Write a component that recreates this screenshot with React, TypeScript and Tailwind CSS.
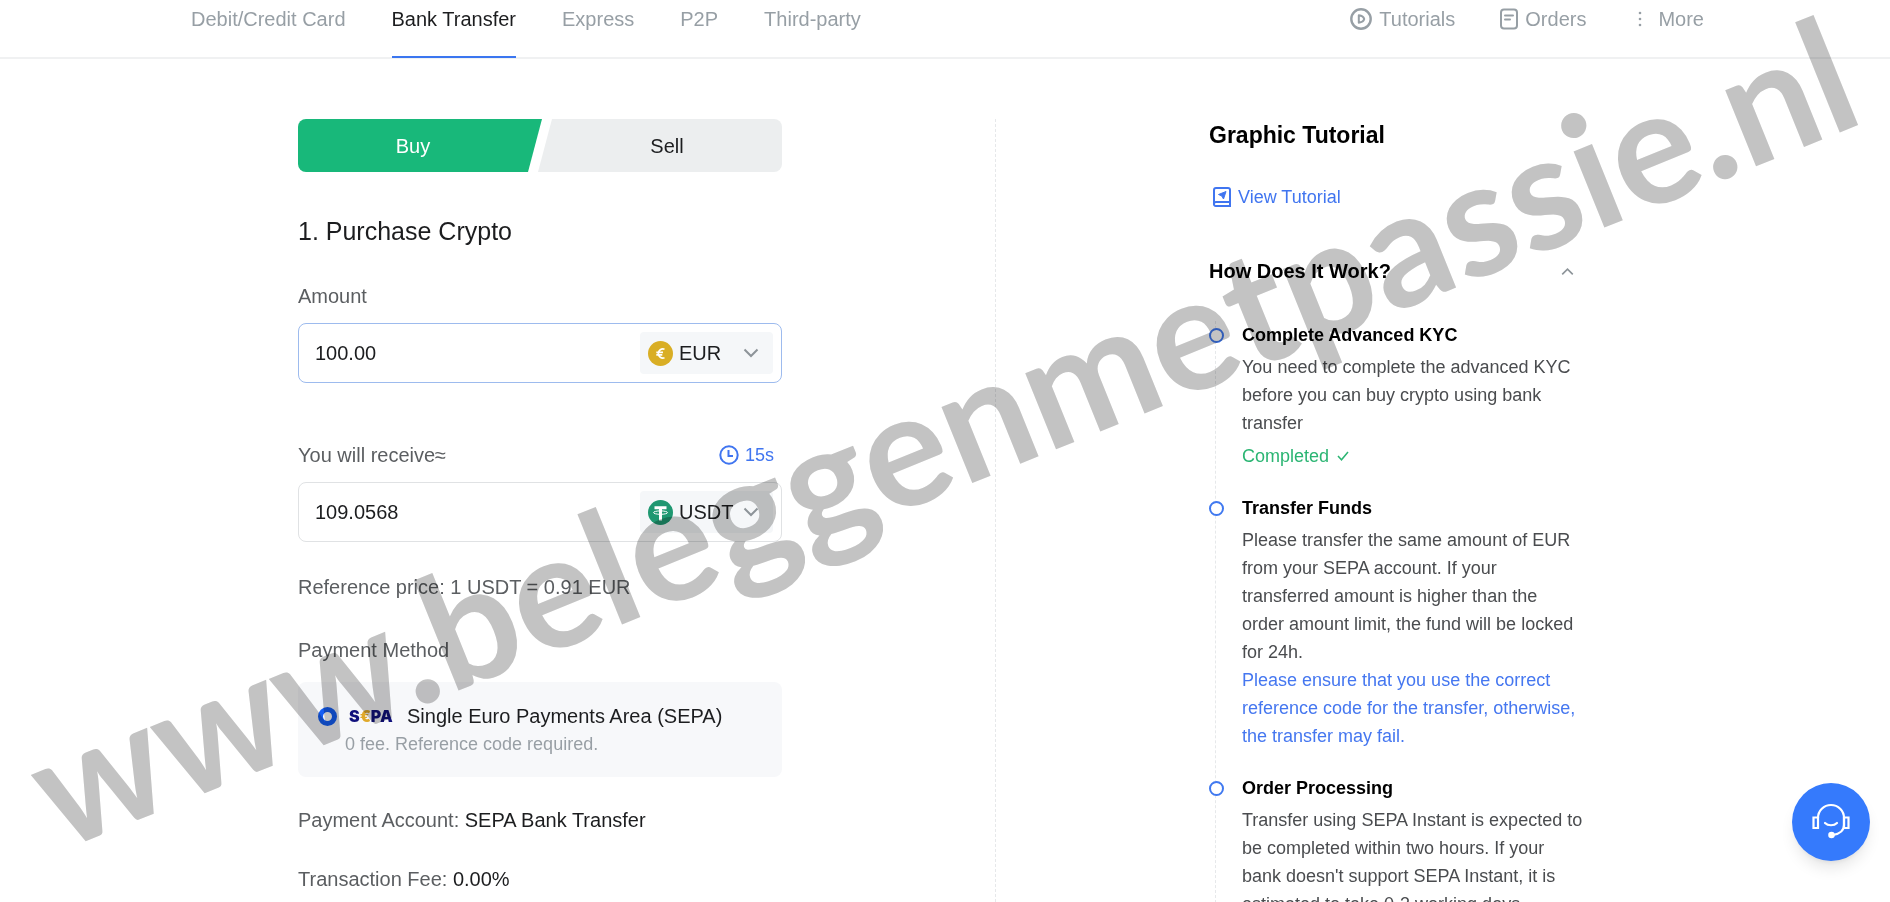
import { useState } from "react";

const tabs = ["Debit/Credit Card", "Bank Transfer", "Express", "P2P", "Third-party"];

const steps = [
  {
    title: "Complete Advanced KYC",
    text: "You need to complete the advanced KYC before you can buy crypto using bank transfer",
    done: true,
  },
  {
    title: "Transfer Funds",
    text: "Please transfer the same amount of EUR from your SEPA account. If your transferred amount is higher than the order amount limit, the fund will be locked for 24h.",
    warning: "Please ensure that you use the correct reference code for the transfer, otherwise, the transfer may fail.",
  },
  {
    title: "Order Processing",
    text: "Transfer using SEPA Instant is expected to be completed within two hours. If your bank doesn't support SEPA Instant, it is estimated to take 0-3 working days.",
  },
];

function PlayIcon() {
  return (
    <svg className="h-6 w-6" viewBox="0 0 24 24" fill="none" stroke="currentColor" strokeWidth="2.4" aria-hidden="true">
      <circle cx="12" cy="12" r="9.7" />
      <path d="M9.8 8.3v7.4c2.6-.4 5-2 5.4-3.7-.4-1.7-2.8-3.3-5.4-3.7z" strokeWidth="2" strokeLinejoin="round" />
    </svg>
  );
}

function OrdersIcon() {
  return (
    <svg className="h-6 w-5" viewBox="0 0 20 24" fill="none" stroke="currentColor" strokeWidth="2" aria-hidden="true">
      <rect x="2" y="2.5" width="16" height="19" rx="3" />
      <path d="M6 8.5h8M6 12.5h5" strokeLinecap="round" />
    </svg>
  );
}

function Chevron({ className }: { className: string }) {
  return (
    <svg className={className} viewBox="0 0 16 10" fill="none" stroke="currentColor" strokeWidth="2" aria-hidden="true">
      <path d="M1.5 1.5 8 8l6.5-6.5" />
    </svg>
  );
}

function EuroIcon() {
  return (
    <svg className="h-[25px] w-[25px] shrink-0" viewBox="0 0 25 25" fill="none" aria-hidden="true">
      <circle cx="12.5" cy="12.5" r="12.5" fill="#d9ae25" />
      <path d="M16.5 8.2a4.6 4.6 0 0 0-6.2 4.3 4.6 4.6 0 0 0 6.2 4.3M8.3 11.4H15M8.3 13.8h6" stroke="#fff" strokeWidth="1.7" />
    </svg>
  );
}

function TetherIcon() {
  return (
    <svg className="h-[25px] w-[25px] shrink-0" viewBox="0 0 25 25" fill="none" aria-hidden="true">
      <circle cx="12.5" cy="12.5" r="12.5" fill="#1f9871" />
      <path d="M6.5 6.3h12v3H14v11.2h-3V9.3H6.5z" fill="#fff" />
      <ellipse cx="12.5" cy="12.6" rx="7" ry="1.7" stroke="#fff" />
    </svg>
  );
}

type CoinFieldProps = {
  id: string;
  label: string;
  value: string;
  onChange: (value: string) => void;
  coin: string;
  icon: React.ReactNode;
  active?: boolean;
  extra?: React.ReactNode;
};

function CoinField({ id, label, value, onChange, coin, icon, active, extra }: CoinFieldProps) {
  return (
    <div>
      <div className="mb-[13px] flex h-7 items-center justify-between pr-2">
        <label htmlFor={id} className="text-[#5b5e61]">{label}</label>
        {extra}
      </div>
      <div className={`flex h-[60px] items-center rounded-lg border pr-2 pl-4 ${active ? "border-[#9dbbee]" : "border-[#e0e2e4]"}`}>
        <input
          id={id}
          value={value}
          onChange={(e) => onChange(e.target.value)}
          className="min-w-0 flex-1 bg-transparent text-[#1c1d1f] outline-none"
        />
        <div className="relative flex h-[42px] w-[133px] items-center rounded bg-[#f5f7f9] pl-2">
          {icon}
          <select aria-label={`${label} currency`} className="w-full appearance-none bg-transparent pl-[6px] text-[#1c1d1f] outline-none">
            <option>{coin}</option>
          </select>
          <Chevron className="pointer-events-none absolute right-[14px] h-[10px] w-4 text-[#8d9499]" />
        </div>
      </div>
    </div>
  );
}

export default function App() {
  const [tab, setTab] = useState("Bank Transfer");
  const [amount, setAmount] = useState("100.00");
  const [receive, setReceive] = useState("109.0568");
  const [open, setOpen] = useState(true);

  return (
    <div className="relative h-screen overflow-hidden bg-white font-['Liberation_Sans',Arial,sans-serif] text-[20px] leading-7 text-[#1c1d1f]">
      <header className="flex h-[59px] justify-between border-b-2 border-[#f0f1f2] pr-[186px] pl-[191px] text-[#979fa5]">
        <nav className="-mb-[1px] flex gap-[46px]">
          {tabs.map((name) => (
            <button
              key={name}
              onClick={() => setTab(name)}
              className={`border-b-2 pt-1 pb-[23px] whitespace-nowrap ${name === tab ? "border-[#3b76f0] text-[#1c1d1f]" : "border-transparent"}`}
            >
              {name}
            </button>
          ))}
        </nav>
        <div className="flex items-start gap-11 pt-[5px] whitespace-nowrap">
          <a href="#tutorials" className="flex items-center gap-[6px]"><PlayIcon /> Tutorials</a>
          <a href="#orders" className="flex items-center gap-[6px]"><OrdersIcon /> Orders</a>
          <button className="ml-2 flex items-center gap-4">
            <svg className="h-5 w-1" viewBox="0 0 4 20" fill="currentColor" aria-hidden="true">
              <circle cx="2" cy="4" r="1.3" />
              <circle cx="2" cy="10" r="1.3" />
              <circle cx="2" cy="16" r="1.3" />
            </svg>
            More
          </button>
        </div>
      </header>

      <div className="flex pt-[60px] pl-[298px]">
        <main className="w-[484px] shrink-0">
          <div className="flex h-[53px]">
            <button className="flex-1 rounded-l-lg bg-[#18b87a] pr-[14px] text-white [clip-path:polygon(0_0,100%_0,calc(100%_-_14px)_100%,0_100%)]">Buy</button>
            <button className="-ml-1 flex-1 rounded-r-lg bg-[#eceeef] pl-[14px] [clip-path:polygon(14px_0,100%_0,100%_100%,0_100%)]">Sell</button>
          </div>

          <h1 className="mt-10 mb-8 text-[25px] leading-[38px]">1. Purchase Crypto</h1>

          <CoinField id="amount" label="Amount" value={amount} onChange={setAmount} coin="EUR" icon={<EuroIcon />} active />
          <div className="mt-[58px]">
            <CoinField
              id="receive"
              label="You will receive≈"
              value={receive}
              onChange={setReceive}
              coin="USDT"
              icon={<TetherIcon />}
              extra={
                <span className="flex items-center gap-[6px] text-[18px] text-[#4075f0]">
                  <svg className="h-5 w-5" viewBox="0 0 20 20" fill="none" stroke="currentColor" strokeWidth="2" aria-hidden="true">
                    <circle cx="10" cy="10" r="8.7" />
                    <path d="M9.5 5v6H14" />
                  </svg>
                  15s
                </span>
              }
            />
          </div>

          <p className="mt-[31px] text-[#5b5e61]">Reference price: 1 USDT = 0.91 EUR</p>
          <p className="mt-[35px] text-[#5b5e61]">Payment Method</p>

          <label className="mt-[18px] flex h-[95px] rounded-lg bg-[#f7f8fa] pt-5 pl-5">
            <input type="radio" name="method" defaultChecked className="mt-[5px] mr-2 h-[19px] w-[19px] shrink-0 appearance-none rounded-full border-[5px] border-[#155ef5] bg-white" />
            <span>
              <span className="flex items-center pl-1">
                <span className="w-[58px] font-['Inter',sans-serif] text-[16px] font-black text-[#10107c]" aria-label="SEPA">
                  S<span className="text-[#e0a92a]">€</span>PA
                </span>
                Single Euro Payments Area (SEPA)
              </span>
              <span className="block text-[18px] text-[#989fa5]">0 fee. Reference code required.</span>
            </span>
          </label>

          <p className="mt-[29px] text-[#5b5e61]">Payment Account: <span className="text-[#1c1d1f]">SEPA Bank Transfer</span></p>
          <p className="mt-[31px] text-[#5b5e61]">Transaction Fee: <span className="text-[#1c1d1f]">0.00%</span></p>
        </main>

        <aside className="ml-[213px] border-l border-dashed border-[#e6e8ea] pl-[213px]">
          <h2 className="mt-[2px] text-[23px] font-bold text-black">Graphic Tutorial</h2>
          <a href="#view" className="mt-[34px] flex items-center gap-[6px] pl-[3px] text-[18px] text-[#4075f0]">
            <svg className="h-5 w-5" viewBox="0 0 20 20" fill="none" stroke="currentColor" strokeWidth="2" aria-hidden="true">
              <path d="M2 16.5V3a2 2 0 0 1 2-2h12a2 2 0 0 1 2 2v16H4a2 2 0 0 1-2-2.5A2 2 0 0 1 4 15h14" />
              <path d="m6.5 7.5 7.5-3-2.5 7.5-1.7-3z" fill="currentColor" strokeWidth="1" />
            </svg>
            View Tutorial
          </a>
          <div className="w-[374px]">
            <button onClick={() => setOpen(!open)} className="mt-[46px] flex w-full items-center justify-between pr-[9px] font-bold text-black">
              How Does It Work?
              <Chevron className={`h-[9px] w-[13px] text-[#8d9499] ${open ? "rotate-180" : ""}`} />
            </button>
            {open && (
              <ol className="mt-9 ml-[6px] border-l border-dashed border-[#e6e8ea] pl-[26px] text-[18px] text-[#4a4c4f]">
                {steps.map((step) => (
                  <li key={step.title} className="relative mb-6">
                    <span className="absolute top-[7px] -left-[33px] h-[15px] w-[15px] rounded-full border-2 border-[#4079f0] bg-white" />
                    <h3 className="mb-1 font-bold text-black">{step.title}</h3>
                    <p>{step.text}</p>
                    {step.warning && <p className="text-[#4577f0]">{step.warning}</p>}
                    {step.done && (
                      <p className="mt-[5px] flex items-center gap-2 text-[#2bb573]">
                        Completed
                        <svg className="h-[10px] w-3" viewBox="0 0 12 10" fill="none" stroke="currentColor" strokeWidth="1.5" aria-hidden="true">
                          <path d="m1 5 3.5 3.8L11 1" />
                        </svg>
                      </p>
                    )}
                  </li>
                ))}
              </ol>
            )}
          </div>
        </aside>
      </div>

      {/* site watermark */}
      <div className="pointer-events-none absolute inset-0 flex items-center justify-center overflow-hidden pr-2 pb-11 mix-blend-multiply">
        <span className="-rotate-[22deg] font-['Lato',sans-serif] text-[160px] leading-none font-bold whitespace-nowrap text-[#c3c3c3]">
          www.beleggenmetpassie.nl
        </span>
      </div>

      <button aria-label="Support" className="fixed right-5 bottom-[41px] flex h-[78px] w-[78px] items-center justify-center rounded-full bg-[#357afc] text-white shadow-lg">
        <svg className="h-10 w-10" viewBox="0 0 40 40" fill="none" stroke="currentColor" strokeWidth="2.2" strokeLinecap="round" aria-hidden="true">
          <path d="M7 16a13 13 0 0 1 26 0v7c0 5-4 9-11 10" />
          <path d="M7 15.5H2.5V26H7zM33 15.5h4.5V26H33z" />
          <path d="M14 21c3 3 9 3 12 0" />
          <circle cx="20.5" cy="33" r="2.2" fill="currentColor" />
        </svg>
      </button>
    </div>
  );
}
